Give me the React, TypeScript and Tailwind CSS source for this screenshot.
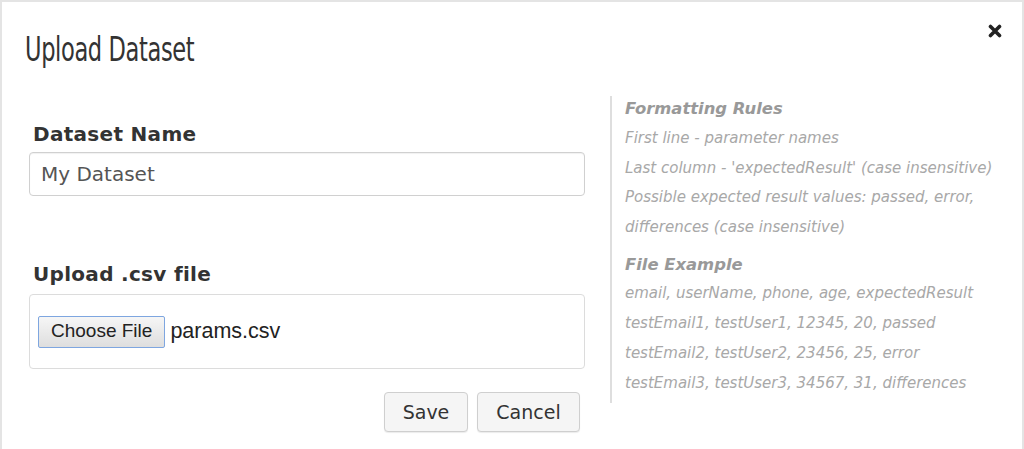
import { useState } from "react";

const RULES = [
  "First line - parameter names",
  "Last column - 'expectedResult' (case insensitive)",
  "Possible expected result values: passed, error,",
  "differences (case insensitive)",
];

const EXAMPLE = [
  "email, userName, phone, age, expectedResult",
  "testEmail1, testUser1, 12345, 20, passed",
  "testEmail2, testUser2, 23456, 25, error",
  "testEmail3, testUser3, 34567, 31, differences",
];

export default function App() {
  const [name, setName] = useState("My Dataset");

  return (
    <div className="w-full h-[449px] bg-white border-t-2 border-x-2 border-[#e4e4e4] font-['DejaVu_Sans',sans-serif] overflow-hidden">

      {/* Header */}
      <div className="flex items-start justify-between pl-[23px] pr-[20px] pt-[27px]">
        <h1 className="text-[33px] leading-[42px] text-[#333] font-['DejaVu_Sans',sans-serif] [font-stretch:condensed] scale-x-[0.76] origin-left tracking-[-0.5px]">
          Upload Dataset
        </h1>
        <button className="mt-[-5px] p-0 text-[#222]" aria-label="Close">
          <svg width="14" height="14" viewBox="0 0 14 14">
            <path d="M2.5 2.5 L11.5 11.5 M11.5 2.5 L2.5 11.5" stroke="currentColor" strokeWidth="3.6" strokeLinecap="round" />
          </svg>
        </button>
      </div>

      <div className="flex mt-[25px]">
        {/* Form */}
        <div className="w-[556px] ml-[27px] pt-[24px]">
          <label className="block text-[20px] leading-[28px] font-bold text-[#333] pl-[4px] tracking-[0.3px]">Dataset Name</label>
          <input
            value={name}
            onChange={e => setName(e.target.value)}
            className="mt-[4px] w-full h-[44px] px-[11px] text-[20px] text-[#555] border border-[#d0d0d0] rounded-[4px] outline-none shadow-[inset_0_1px_1px_rgba(0,0,0,0.06)]"
          />

          <label className="block mt-[64px] text-[20px] leading-[28px] font-bold text-[#333] pl-[4px] tracking-[0.3px]">Upload .csv file</label>
          <div className="mt-[6px] h-[75px] border border-[#dcdcdc] rounded-[4px] flex items-center px-[8px]">
            <span className="h-[32px] px-[12px] flex items-center border border-[#7ea6e0] rounded-[2px] bg-gradient-to-b from-[#f6f6f6] to-[#dedede] text-[19px] text-[#222] font-['Liberation_Sans',sans-serif]">
              Choose File
            </span>
            <span className="ml-[5px] text-[21.5px] text-[#222] font-['Liberation_Sans',sans-serif]">params.csv</span>
          </div>

          <div className="flex justify-end gap-[9px] mt-[23px] pr-[5px]">
            <button className="w-[84px] h-[40px] text-[19px] text-[#333] bg-[#f5f5f5] border border-[#cfcfcf] rounded-[4px] shadow-[0_1px_1px_rgba(0,0,0,0.08)]">Save</button>
            <button className="w-[103px] h-[40px] text-[19px] text-[#333] bg-[#f5f5f5] border border-[#cfcfcf] rounded-[4px] shadow-[0_1px_1px_rgba(0,0,0,0.08)]">Cancel</button>
          </div>
        </div>

        {/* Help */}
        <div className="ml-[25px] h-[307px] border-l-2 border-[#dedede] pl-[13px] italic text-[#a8a8a8]">
          <p className="text-[16.4px] leading-[26px] font-bold text-[#999]">Formatting Rules</p>
          <div className="mt-[2px]">
            {RULES.map(r => (
              <p key={r} className="text-[15px] leading-[29.7px]">{r}</p>
            ))}
          </div>
          <p className="text-[16.4px] leading-[26px] font-bold text-[#999] mt-[9px]">File Example</p>
          {EXAMPLE.map(r => (
            <p key={r} className="text-[15px] leading-[30px]">{r}</p>
          ))}
        </div>
      </div>
    </div>
  );
}
